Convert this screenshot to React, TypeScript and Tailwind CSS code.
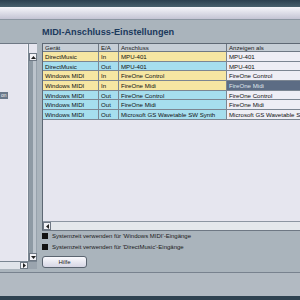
import React from "react";

type Row = { dev: string; io: string; port: string; show: string; color: "y" | "c"; sel?: boolean };

const rows: Row[] = [
  { dev: "DirectMusic", io: "In", port: "MPU-401", show: "MPU-401", color: "y" },
  { dev: "DirectMusic", io: "Out", port: "MPU-401", show: "MPU-401", color: "c" },
  { dev: "Windows MIDI", io: "In", port: "FireOne Control", show: "FireOne Control", color: "y" },
  { dev: "Windows MIDI", io: "In", port: "FireOne Midi", show: "FireOne Midi", color: "y", sel: true },
  { dev: "Windows MIDI", io: "Out", port: "FireOne Control", show: "FireOne Control", color: "c" },
  { dev: "Windows MIDI", io: "Out", port: "FireOne Midi", show: "FireOne Midi", color: "c" },
  { dev: "Windows MIDI", io: "Out", port: "Microsoft GS Wavetable SW Synth", show: "Microsoft GS Wavetable SW Synth", color: "c" },
];

function Cell({ children, className }: { children?: React.ReactNode; className: string }) {
  return (
    <div
      className={
        "h-[9.67px] border-r border-b border-[#7c8692] px-[2px] text-[6.1px] leading-[9px] whitespace-nowrap overflow-hidden text-[#101010] " +
        className
      }
    >
      {children}
    </div>
  );
}

export default function App() {
  return (
    <div className="w-[300px] h-[300px] overflow-hidden bg-[#aab4bc] flex flex-col font-['Liberation_Sans',Arial,sans-serif]">
      <div className="h-[7px] bg-gradient-to-b from-[#2c4050] to-[#48606e]" />
      <div className="h-[13px] bg-gradient-to-b from-[#f6f6fb] to-[#c4c4d4] border-b border-[#8c96a2]" />

      <div className="h-[252px] flex">
        {/* left list */}
        <div className="w-[37px] flex flex-col">
          <div className="h-[23px]" />
          <div className="h-[226px] flex flex-col border-t border-[#6e7884]">
            <div className="flex-1 flex">
              <div className="w-[28px] bg-[#e6e6ef] border-r border-[#f4f4f8] flex flex-col">
                <div className="h-[48px]" />
                <div className="h-[7px] w-[8px] bg-[#6a788a] text-[#f0f0f0] text-[5px] leading-[7px] pl-[1px]">on</div>
              </div>
              <div className="w-[9px] flex flex-col bg-[#97a2ac] border-l border-[#7a8692]">
                <div className="h-[9px] bg-[#e6e6ef]" />
                <div className="h-[8px] bg-[#f2f2f6] border border-[#6e7884] flex items-center justify-center">
                  <svg width="5" height="3" viewBox="0 0 5 3"><path d="M0 3 L2.5 0 L5 3Z" fill="#202020" /></svg>
                </div>
                <div className="flex-1 flex">
                  <div className="w-[4px] bg-[#8e9aa4]" />
                  <div className="w-[3px] bg-[#bcc4cc]" />
                </div>
                <div className="h-[8px] bg-[#f2f2f6] border border-[#6e7884] flex items-center justify-center">
                  <svg width="5" height="3" viewBox="0 0 5 3"><path d="M0 0 L2.5 3 L5 0Z" fill="#202020" /></svg>
                </div>
              </div>
            </div>
            <div className="h-[8px] flex border-t border-[#7a8692]">
              <div className="w-[20px] bg-[#e0e4ea]" />
              <div className="w-[8px] bg-[#f2f2f6] border border-[#6e7884] flex items-center justify-center">
                <svg width="3" height="5" viewBox="0 0 3 5"><path d="M0 0 L3 2.5 L0 5Z" fill="#202020" /></svg>
              </div>
              <div className="w-[9px] bg-[#9aa4ae]" />
            </div>
          </div>
        </div>

        {/* right content */}
        <div className="ml-[5px] flex-1 flex flex-col min-w-0">
          <div className="h-[23px] flex items-center pt-[3px] text-[9.2px] font-bold text-[#1c3a5c] whitespace-nowrap">
            MIDI-Anschluss-Einstellungen
          </div>
          <div className="h-[187px] flex flex-col border-l border-t border-[#5e6874] bg-[#e6e6ef] overflow-hidden">
            <div className="grid grid-cols-[56px_20px_108px_130px] w-[314px]">
              {["Gerät", "E/A", "Anschluss", "Anzeigen als"].map((h) => (
                <div
                  key={h}
                  className="h-[8px] bg-[#c6ced6] border-r border-b border-[#6e7884] px-[2px] text-[6.1px] leading-[7px] text-[#1a1a1a] whitespace-nowrap"
                >
                  {h}
                </div>
              ))}
              {rows.map((r, i) => {
                const bg = r.color === "y" ? "bg-[#f6e6a2]" : "bg-[#a6deee]";
                return (
                  <React.Fragment key={i}>
                    <Cell className={bg}>{r.dev}</Cell>
                    <Cell className={bg}>{r.io}</Cell>
                    <Cell className={bg}>{r.port}</Cell>
                    <Cell className={r.sel ? "bg-[#5c6c84] !text-[#dfe4ec]" : "bg-[#eeeef5]"}>{r.show}</Cell>
                  </React.Fragment>
                );
              })}
            </div>
            <div className="flex-1" />
            <div className="h-[9px] flex border-t border-[#8c96a2] bg-[#e4e8ec]">
              <div className="w-[8px] bg-[#f2f2f6] border border-[#6e7884] flex items-center justify-center">
                <svg width="3" height="5" viewBox="0 0 3 5"><path d="M3 0 L0 2.5 L3 5Z" fill="#202020" /></svg>
              </div>
            </div>
          </div>
          <div className="h-[3px] border-t border-[#6e7884]" />
          <div className="flex items-center h-[6px] gap-[4px]">
            <div className="w-[6px] h-[6px] bg-[#121212]" />
            <span className="text-[6px] leading-[6px] text-[#1a1a1a] whitespace-nowrap">Systemzeit verwenden für 'Windows MIDI'-Eingänge</span>
          </div>
          <div className="h-[5px]" />
          <div className="flex items-center h-[6px] gap-[4px]">
            <div className="w-[6px] h-[6px] bg-[#121212]" />
            <span className="text-[6px] leading-[6px] text-[#1a1a1a] whitespace-nowrap">Systemzeit verwenden für 'DirectMusic'-Eingänge</span>
          </div>
          <div className="h-[6px]" />
          <div className="w-[45px] h-[12px] rounded-[3px] border border-[#5a6470] bg-gradient-to-b from-[#fafafe] to-[#d6d6e4] flex items-center justify-center text-[6px] text-[#1a1a1a]">
            Hilfe
          </div>
        </div>
      </div>

      <div className="h-[24px] border-t border-[#78828e] bg-[#b2bac2]" />
      <div className="flex-1 bg-[#2e4250]" />
    </div>
  );
}
